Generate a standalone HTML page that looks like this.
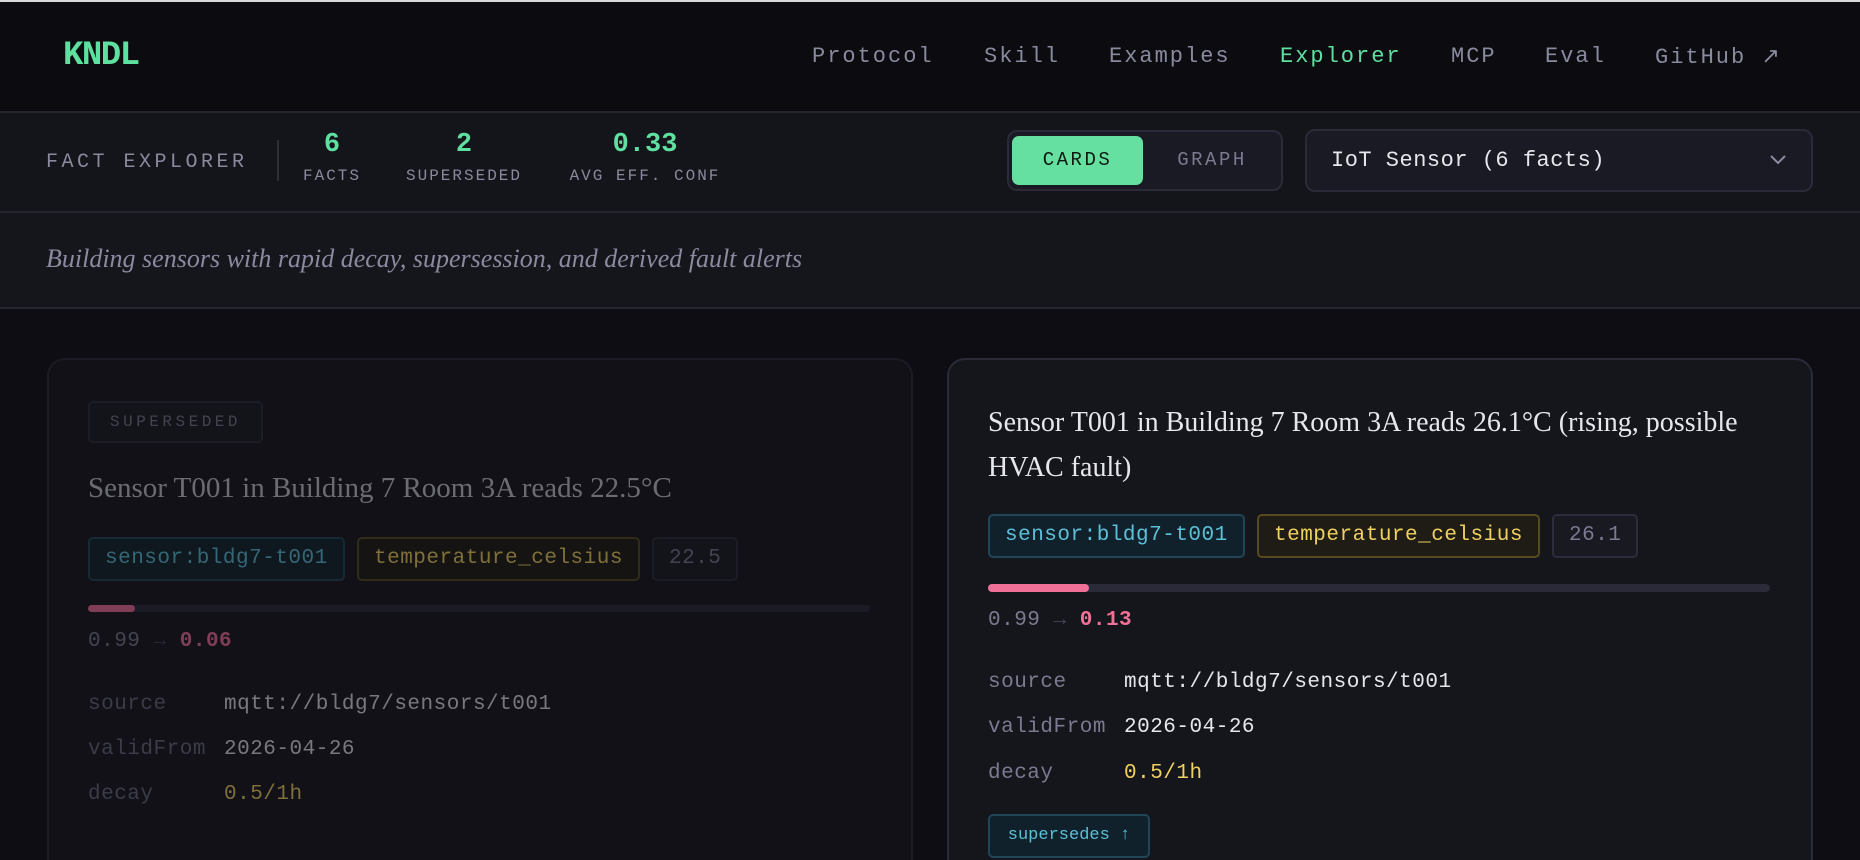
<!DOCTYPE html>
<html style="width:1860px;height:860px;overflow:hidden"><head><meta charset="utf-8"><style>
*{box-sizing:border-box;margin:0;padding:0}
body{width:1860px;height:860px;overflow:hidden;background:#0d0d13;font-family:"Liberation Mono",monospace;color:#8a8a9e;position:relative}
.abs{position:absolute}
.topline{left:0;top:0;width:1860px;height:2px;background:#d8d8d8}
header{left:0;top:2px;width:1860px;height:111px;background:#0b0b10;border-bottom:2px solid #25252f}
.logo{left:63px;top:37px;font-size:34px;font-weight:bold;color:#5fe0a0;letter-spacing:-1.5px}
.nav{top:44px;font-size:22px;letter-spacing:2px;color:#8a8a9e}
.tool{left:0;top:113px;width:1860px;height:100px;background:#14141b;border-bottom:2px solid #25252f}
.sub{left:0;top:213px;width:1860px;height:96px;background:#15151c;border-bottom:2px solid #25252f}
.lbl{font-size:17px;letter-spacing:3px;color:#8a8a9e}
.num{font-size:27px;font-weight:bold;color:#5fe0a0;text-align:center}
.card{background:#15151c;border:2px solid #2a2a38;border-radius:18px;height:540px}
.tag{position:absolute;height:44px;line-height:40px;font-size:21px;letter-spacing:0.5px;border:2px solid;border-radius:5px;padding:0 15px;white-space:nowrap}
.c{color:#5bc0d8;border-color:#1f4556;background:#11212b}
.y{color:#f0d060;border-color:#564b1f;background:#1e1c14}
.g{color:#7a7a90;border-color:#2c2c3a;background:#191922}
.title{font-family:"Liberation Serif",serif;font-size:28px;color:#e6e6ec;line-height:45px;white-space:nowrap}
.row{font-size:21px;letter-spacing:0.5px}
.row span{position:absolute}
</style></head><body>
<div class="abs topline"></div>
<header class="abs"></header>
<div class="abs logo">KNDL</div>
<div class="abs nav" style="left:812px">Protocol</div>
<div class="abs nav" style="left:984px">Skill</div>
<div class="abs nav" style="left:1109px">Examples</div>
<div class="abs nav" style="left:1280px;color:#5fe0a0">Explorer</div>
<div class="abs nav" style="left:1451px">MCP</div>
<div class="abs nav" style="left:1545px">Eval</div>
<div class="abs nav" style="left:1655px">GitHub ↗</div>

<div class="abs tool"></div>
<div class="abs lbl" style="left:46px;top:151px;font-size:20px;letter-spacing:3.5px">FACT EXPLORER</div>
<div class="abs" style="left:277px;top:140px;width:2px;height:41px;background:#2e2e3a"></div>
<div class="abs num" style="left:302px;top:130px;width:60px">6</div>
<div class="abs lbl" style="left:302px;top:167px;width:60px;text-align:center;font-size:16px;letter-spacing:2px">FACTS</div>
<div class="abs num" style="left:404px;top:130px;width:120px">2</div>
<div class="abs lbl" style="left:398px;top:167px;width:132px;text-align:center;font-size:16px;letter-spacing:2px">SUPERSEDED</div>
<div class="abs num" style="left:565px;top:130px;width:160px">0.33</div>
<div class="abs lbl" style="left:562px;top:167px;width:166px;text-align:center;font-size:16px;letter-spacing:2px">AVG EFF. CONF</div>

<div class="abs" style="left:1007px;top:130px;width:276px;height:61px;border:2px solid #2a2a38;border-radius:10px;background:#1a1a24"></div>
<div class="abs" style="left:1012px;top:136px;width:131px;height:49px;border-radius:7px;background:#66e0a0;color:#0c1a12;font-size:19px;letter-spacing:2.5px;line-height:49px;text-align:center">CARDS</div>
<div class="abs" style="left:1150px;top:136px;width:124px;height:49px;color:#7a7a90;font-size:19px;letter-spacing:2.5px;line-height:49px;text-align:center">GRAPH</div>

<div class="abs" style="left:1305px;top:129px;width:508px;height:63px;border:2px solid #2a2a38;border-radius:10px;background:#1a1a24"></div>
<div class="abs" style="left:1331px;top:148px;font-size:22px;color:#e6e6ec;letter-spacing:0.5px">IoT Sensor (6 facts)</div>
<svg class="abs" style="left:1768px;top:153px" width="20" height="14" viewBox="0 0 20 14"><path d="M3 3l7 7 7-7" fill="none" stroke="#8a8a9e" stroke-width="2"/></svg>

<div class="abs sub"></div>
<div class="abs" style="left:46px;top:244px;font-family:'Liberation Serif',serif;font-style:italic;font-size:26px;color:#8a8aa0">Building sensors with rapid decay, supersession, and derived fault alerts</div>

<div class="abs card" style="left:47px;top:358px;width:866px;opacity:0.5">
  <div class="abs" style="left:39px;top:41px;width:175px;height:42px;border:2px solid #2c2c3a;border-radius:5px;background:#191922;color:#7a7a90;font-size:16px;letter-spacing:3.5px;line-height:38px;text-align:center">SUPERSEDED</div>
  <div class="abs title" style="left:39px;top:106px;color:#c8c8d0;font-size:29px">Sensor T001 in Building 7 Room 3A reads 22.5°C</div>
  <div class="tag c" style="left:39px;top:177px">sensor:bldg7-t001</div>
  <div class="tag y" style="left:308px;top:177px">temperature_celsius</div>
  <div class="tag g" style="left:603px;top:177px">22.5</div>
  <div class="abs" style="left:39px;top:245px;width:782px;height:7px;border-radius:4px;background:#2a2a38"></div>
  <div class="abs" style="left:39px;top:245px;width:47px;height:7px;border-radius:4px;background:#f07098"></div>
  <div class="abs row" style="left:39px;top:270px;color:#7a7a90">0.99 <span style="position:static;color:#44445a">→</span> <b style="color:#f07098">0.06</b></div>
  <div class="abs row" style="left:39px;top:333px;width:700px;height:140px;color:#6a6a80">
    <span style="top:0">source</span><span style="left:136px;top:0;color:#e0e0e6">mqtt://bldg7/sensors/t001</span>
    <span style="top:45px">validFrom</span><span style="left:136px;top:45px;color:#e0e0e6">2026-04-26</span>
    <span style="top:90px">decay</span><span style="left:136px;top:90px;color:#f0d060">0.5/1h</span>
  </div>
</div>

<div class="abs card" style="left:947px;top:358px;width:866px">
  <div class="abs title" style="left:39px;top:40px">Sensor T001 in Building 7 Room 3A reads 26.1°C (rising, possible<br>HVAC fault)</div>
  <div class="tag c" style="left:39px;top:154px">sensor:bldg7-t001</div>
  <div class="tag y" style="left:308px;top:154px">temperature_celsius</div>
  <div class="tag g" style="left:603px;top:154px">26.1</div>
  <div class="abs" style="left:39px;top:224px;width:782px;height:8px;border-radius:4px;background:#2a2a38"></div>
  <div class="abs" style="left:39px;top:224px;width:101px;height:8px;border-radius:4px;background:#f07098"></div>
  <div class="abs row" style="left:39px;top:249px;color:#7a7a90">0.99 <span style="position:static;color:#44445a">→</span> <b style="color:#f07098">0.13</b></div>
  <div class="abs row" style="left:39px;top:311px;width:700px;height:140px;color:#7a7a90">
    <span style="top:0">source</span><span style="left:136px;top:0;color:#e6e6ec">mqtt://bldg7/sensors/t001</span>
    <span style="top:45px">validFrom</span><span style="left:136px;top:45px;color:#e6e6ec">2026-04-26</span>
    <span style="top:91px">decay</span><span style="left:136px;top:91px;color:#f0d060">0.5/1h</span>
  </div>
  <div class="abs" style="left:39px;top:454px;width:162px;height:44px;border:2px solid #1f4556;border-radius:5px;background:#11212b;color:#5bc0d8;font-size:17px;line-height:40px;text-align:center">supersedes ↑</div>
</div>
</body></html>
